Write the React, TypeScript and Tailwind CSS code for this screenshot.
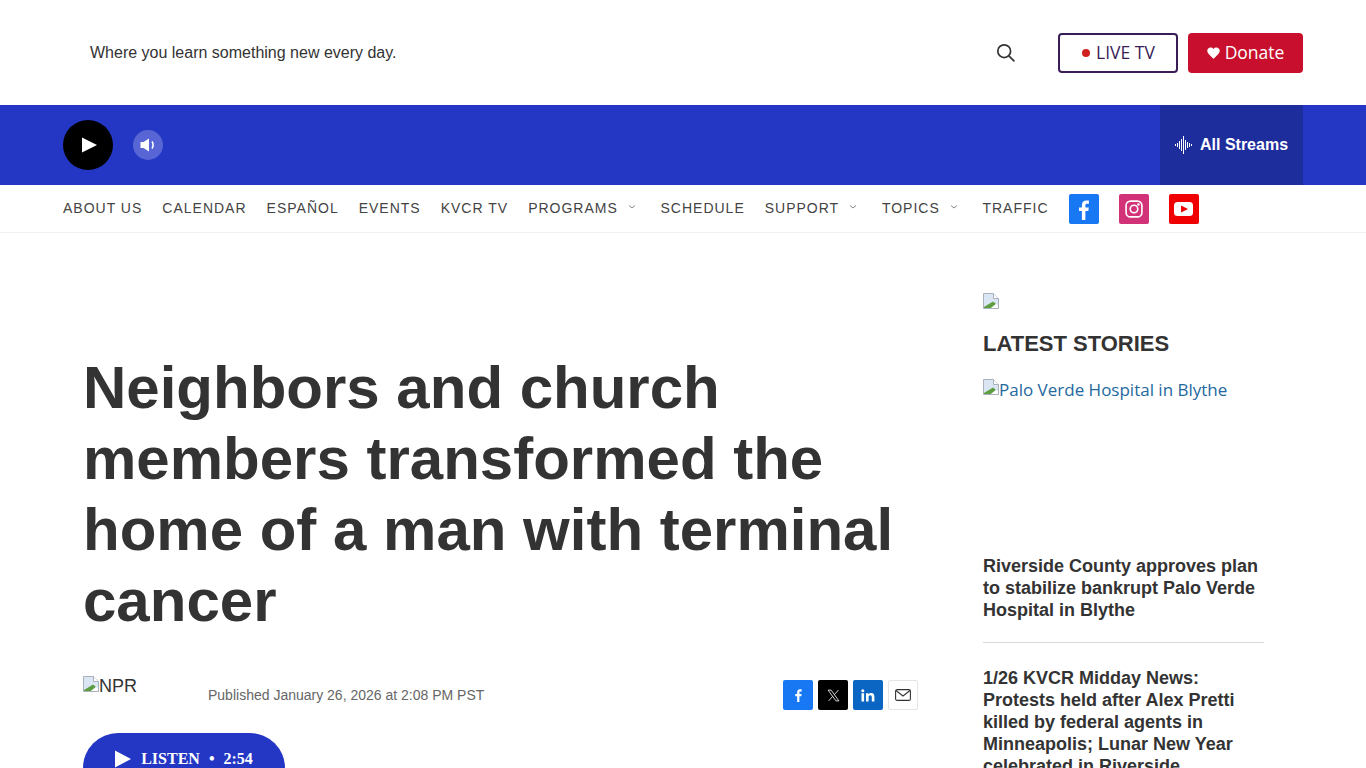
import React from "react";

const Broken = () => (
  <svg width="16" height="16" viewBox="0 0 16 16" className="shrink-0">
    <path d="M0.5 0.5H10.5L15.5 5.5V15.5H0.5Z" fill="#dbe6f4" stroke="#a9b1bd" />
    <path d="M10.5 0.5V5.5H15.5" fill="#fff" stroke="#a9b1bd" />
    <path d="M1 15V14L10 8.5L13 11L8 15Z" fill="#5e9e42" />
    <path d="M8 15L13 11L15 12.5V15Z" fill="#fff" />
  </svg>
);

const Chevron = () => (
  <svg width="10" height="10" viewBox="0 0 10 10" className="ml-[9px] mr-[3.7px] mb-[2px]" fill="none" stroke="#777" strokeWidth="0.9">
    <path d="M2 3.5L5 6L8 3.5" />
  </svg>
);

const NavItem = ({ label, chev }: { label: string; chev?: boolean }) => (
  <span className="flex items-center pb-[2px] text-[14px] leading-[46px] tracking-[1px] text-[#444]">
    {label}
    {chev && <Chevron />}
  </span>
);

const Social = ({ bg, children }: { bg: string; children: React.ReactNode }) => (
  <span className={`flex w-[30px] h-[30px] items-center justify-center rounded-[2px] ${bg}`}>{children}</span>
);

export default function App() {
  return (
    <div className="h-screen overflow-hidden bg-white font-['Liberation_Sans',Arial,sans-serif] text-[#333]">
      {/* top header */}
      <header className="flex h-[105px] items-center pl-[90px] pr-[63px]">
        <p className="text-[16px] text-[#333]">Where you learn something new every day.</p>
        <svg width="20" height="20" viewBox="0 0 20 20" fill="none" stroke="#333" strokeWidth="1.7" className="ml-auto mr-[42px]">
          <circle cx="8.2" cy="8.2" r="6.4" />
          <path d="M12.8 12.8L18.4 18.4" />
        </svg>
        <span className="flex h-[40px] w-[120px] items-center justify-center rounded-[4px] border-2 border-[#3a1d57] bg-white font-['Open_Sans',sans-serif] text-[17.5px] text-[#3a1d57]">
          <span className="mr-[6px] ml-[1px] h-2 w-2 rounded-full bg-[#d02020]" />
          LIVE TV
        </span>
        <span className="ml-[10px] flex h-[40px] w-[115px] items-center justify-center rounded-[4px] bg-[#c8102e] font-['Open_Sans',sans-serif] text-[17.5px] text-white">
          <svg width="13" height="12" viewBox="0 0 24 22" fill="#fff" className="mr-[5px]">
            <path d="M12 21.5L10.3 20C4.2 14.5 0.5 11.1 0.5 6.9 0.5 3.4 3.2 0.8 6.6 0.8c2 0 3.9 0.9 5.4 2.6C13.5 1.7 15.4 0.8 17.4 0.8c3.4 0 6.1 2.6 6.1 6.1 0 4.2-3.7 7.6-9.8 13.1Z" />
          </svg>
          Donate
        </span>
      </header>

      {/* player bar */}
      <div className="flex h-[80px] items-center bg-[#2437c4] pl-[63px] pr-[63px]">
        <span className="flex h-[50px] w-[50px] items-center justify-center rounded-full bg-black">
          <svg width="15" height="16" viewBox="0 0 15 16" className="ml-[2px]">
            <path d="M0 0.5L15 8L0 15.5Z" fill="#fff" />
          </svg>
        </span>
        <span className="ml-[20px] flex h-[30px] w-[30px] items-center justify-center rounded-full bg-[#5766d4]">
          <svg width="16" height="14" viewBox="0 0 16 14" fill="none">
            <path d="M0.5 4H3.5L9 0.5V13.5L3.5 10H0.5Z" fill="#fff" />
            <path d="M12 3.5C13.4 5.3 13.4 8.7 12 10.5" stroke="#fff" strokeWidth="1.6" />
          </svg>
        </span>
        <span className="ml-auto flex h-[80px] w-[143px] items-center gap-[7px] bg-[#1e2d9c] pl-[15px] text-[16px] font-bold text-white">
          <svg width="18" height="18" viewBox="0 0 18 18" fill="#fff">
            <rect x="0" y="8" width="1" height="2" />
            <rect x="2" y="7" width="1" height="4" />
            <rect x="4" y="5" width="1" height="8" />
            <rect x="6" y="3" width="1" height="12" />
            <rect x="8" y="0" width="1" height="18" />
            <rect x="10" y="4" width="1" height="10" />
            <rect x="12" y="6" width="1" height="6" />
            <rect x="14" y="7" width="1" height="4" />
            <rect x="16" y="8" width="1" height="2" />
          </svg>
          All Streams
        </span>
      </div>

      {/* nav */}
      <nav className="flex h-[48px] items-center gap-[20px] border-b border-[#f0f2f2] pl-[63px]">
        <NavItem label="ABOUT US" />
        <NavItem label="CALENDAR" />
        <NavItem label="ESPAÑOL" />
        <NavItem label="EVENTS" />
        <NavItem label="KVCR TV" />
        <NavItem label="PROGRAMS" chev />
        <NavItem label="SCHEDULE" />
        <NavItem label="SUPPORT" chev />
        <NavItem label="TOPICS" chev />
        <NavItem label="TRAFFIC" />
        <Social bg="bg-[#1877f2]">
          <svg width="10" height="20" viewBox="0 0 10 20" fill="#fff" className="mt-[2px]">
            <path d="M6.4 20V11H9.3L9.8 7.5H6.4V5.4C6.4 4.4 6.7 3.7 8.1 3.7H9.9V0.6C9.6 0.5 8.5 0.4 7.3 0.4 4.7 0.4 2.9 2 2.9 4.9V7.5H0V11H2.9V20Z" />
          </svg>
        </Social>
        <Social bg="bg-[#d13278]">
          <svg width="18" height="18" viewBox="0 0 20 20" fill="none" stroke="#fff" strokeWidth="1.8">
            <rect x="1.2" y="1.2" width="17.6" height="17.6" rx="5" />
            <circle cx="10" cy="10" r="4.2" />
            <circle cx="15" cy="5" r="0.6" fill="#fff" />
          </svg>
        </Social>
        <Social bg="bg-[#f00000]">
          <svg width="19" height="14" viewBox="0 0 19 14">
            <rect x="0" y="0" width="19" height="14" rx="3.5" fill="#fff" />
            <path d="M7 3.5L14 7L7 10.5Z" fill="#f00000" />
          </svg>
        </Social>
      </nav>

      {/* main */}
      <main className="flex">
        <article className="w-[983px] pl-[83px] pr-[65px] pt-[119px]">
          <h1 className="w-[836px] text-[60px] font-bold leading-[71px] text-[#333]">
            Neighbors and church members transformed the home of a man with terminal cancer
          </h1>
          <div className="mt-[40px] flex h-[46px] items-start">
            <span className="flex w-[125px] items-start text-[18px] leading-[21px]">
              <Broken />
              NPR
            </span>
            <span className="mt-[9px] text-[14px] text-[#666]">Published January 26, 2026 at 2:08 PM PST</span>
            <div className="ml-auto mt-[4px] flex gap-[5px]">
              <Social bg="bg-[#1877f2]">
                <svg width="7" height="13" viewBox="0 0 10 20" fill="#fff">
                  <path d="M6.4 20V11H9.3L9.8 7.5H6.4V5.4C6.4 4.4 6.7 3.7 8.1 3.7H9.9V0.6C9.6 0.5 8.5 0.4 7.3 0.4 4.7 0.4 2.9 2 2.9 4.9V7.5H0V11H2.9V20Z" />
                </svg>
              </Social>
              <Social bg="bg-black">
                <svg width="13" height="13" viewBox="0 0 24 24" fill="none" stroke="#fff" strokeWidth="1.5">
                  <path d="M2 2H7.5L22 22H16.5Z" />
                  <path d="M21 2L13.5 10.5M10.5 13.5L3 22" />
                </svg>
              </Social>
              <Social bg="bg-[#0a66c2]">
                <svg width="14" height="13" viewBox="0 0 14 13" fill="#fff">
                  <rect x="0.5" y="4.2" width="2.6" height="8.3" />
                  <circle cx="1.8" cy="1.8" r="1.5" />
                  <path d="M5 4.2H7.5V5.4C8 4.6 9 4 10.2 4 12.6 4 13.4 5.5 13.4 7.8V12.5H10.8V8.4C10.8 7.3 10.5 6.3 9.4 6.3 8.2 6.3 7.6 7.1 7.6 8.4V12.5H5Z" />
                </svg>
              </Social>
              <span className="flex h-[30px] w-[30px] items-center justify-center rounded-[2px] border border-[#e5e5e5] bg-white">
                <svg width="16" height="12" viewBox="0 0 16 12" fill="none" stroke="#333" strokeWidth="1.1">
                  <rect x="0.6" y="0.6" width="14.8" height="10.8" rx="1.5" />
                  <path d="M1 1.5L8 7L15 1.5" />
                </svg>
              </span>
            </div>
          </div>
          <div className="mt-[11px] flex h-[70px] w-[202px] items-start justify-center rounded-[35px] bg-[#2437c4] pt-[14px] font-['Liberation_Serif',serif] text-[16px] font-bold text-white">
            <svg width="16" height="18" viewBox="0 0 16 18" className="mr-[10px] mt-[3px]">
              <path d="M0 0.5L16 9L0 17.5Z" fill="#fff" />
            </svg>
            LISTEN
            <span className="mx-[9px]">•</span>
            2:54
          </div>
        </article>

        <aside className="w-[281px] pt-[60px]">
          <Broken />
          <h2 className="mt-[21px] text-[22px] font-bold leading-[28px] text-[#333]">LATEST STORIES</h2>
          <div className="mt-[21px] flex h-[176px] items-start font-['Open_Sans',sans-serif] text-[17px] leading-[21px] text-[#23689e]">
            <Broken />
            Palo Verde Hospital in Blythe
          </div>
          <p className="text-[18px] font-bold leading-[22px] text-[#333]">
            Riverside County approves plan to stabilize bankrupt Palo Verde Hospital in Blythe
          </p>
          <hr className="mt-[21px] border-[#d9d9d9]" />
          <p className="mt-[24px] text-[18px] font-bold leading-[22px] text-[#333]">
            1/26 KVCR Midday News: Protests held after Alex Pretti killed by federal agents in Minneapolis; Lunar New Year celebrated in Riverside
          </p>
        </aside>
      </main>
    </div>
  );
}
